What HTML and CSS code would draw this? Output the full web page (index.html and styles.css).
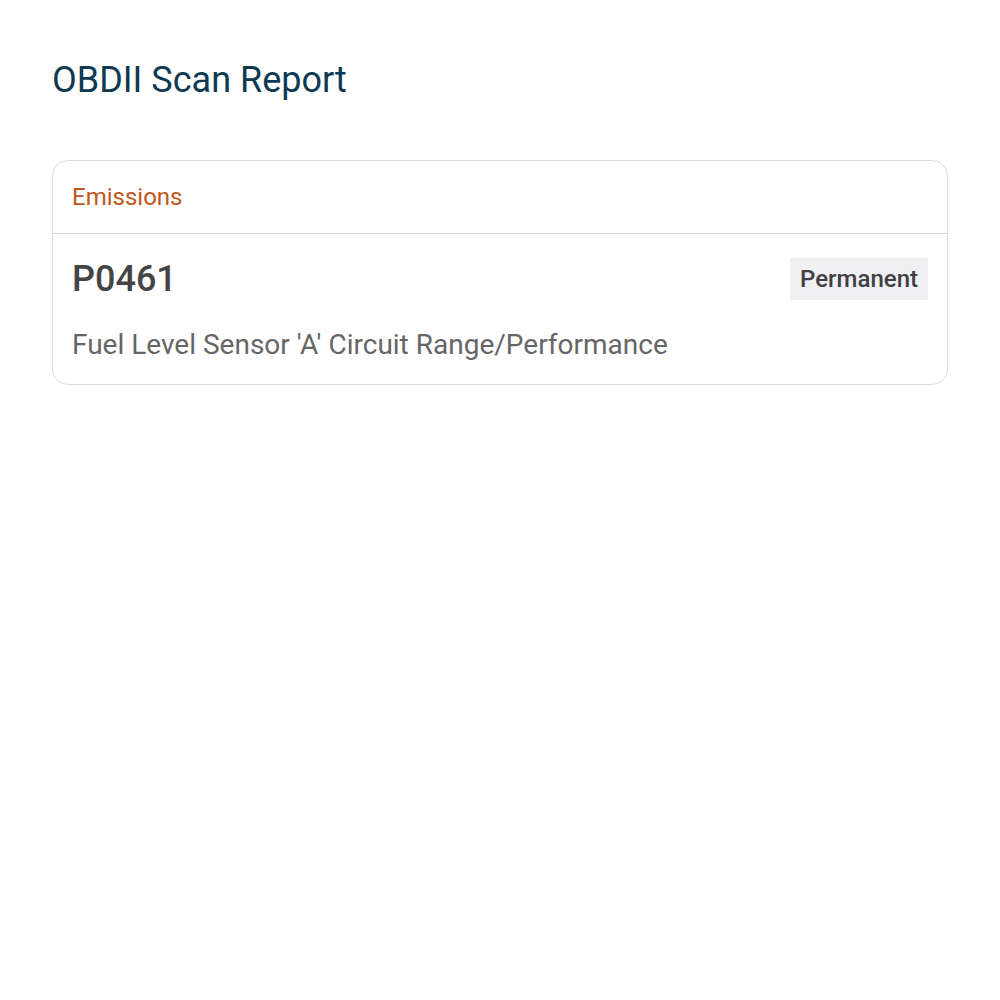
FILE: index.html
```html
<!DOCTYPE html>
<html lang="en">
<head>
<meta charset="utf-8">
<title>OBDII Scan Report</title>
<link rel="stylesheet" href="styles.css">
</head>
<body>
<main class="report">
  <h1 class="report-title">OBDII Scan Report</h1>
  <section class="card">
    <header class="card-header">Emissions</header>
    <div class="card-body">
      <div class="code-row">
        <span class="code">P0461</span>
        <span class="badge">Permanent</span>
      </div>
      <p class="description">Fuel Level Sensor 'A' Circuit Range/Performance</p>
    </div>
  </section>
</main>
</body>
</html>
```
FILE: styles.css
```css
html, body {
  margin: 0;
  padding: 0;
  background: #ffffff;
}

body {
  font-family: Roboto, "Noto Sans", sans-serif;
}

.report {
  padding: 58px 52px;
}

.report-title {
  margin: 0 0 58px;
  font-size: 36px;
  font-weight: 400;
  line-height: 44px;
  color: #0d3a52;
}

.card {
  border: 1px solid #dcdcdc;
  border-radius: 16px;
  overflow: hidden;
}

.card-header {
  padding: 0 19px;
  height: 72px;
  display: flex;
  align-items: center;
  border-bottom: 1px solid #d6d6d6;
  font-size: 24px;
  color: #c2561a;
}

.card-body {
  padding: 24px 19px 23px;
}

.code-row {
  display: flex;
  justify-content: space-between;
  align-items: center;
}

.code {
  font-size: 36px;
  font-weight: 500;
  color: #444444;
}

.badge {
  background: #f0f0f3;
  padding: 0 10px;
  height: 42px;
  display: flex;
  align-items: center;
  font-size: 24px;
  font-weight: 500;
  color: #3f3f44;
}

.description {
  margin: 28px 0 0;
  font-size: 28px;
  color: #666666;
}
```
